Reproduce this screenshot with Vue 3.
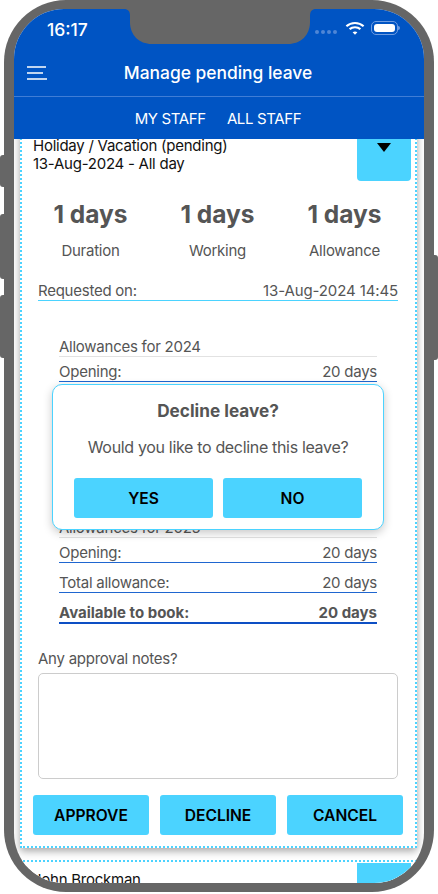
<script setup>
import { ref } from 'vue';

const notes = ref('');

const stats = [
    { value: '1 days', label: 'Duration' },
    { value: '1 days', label: 'Working' },
    { value: '1 days', label: 'Allowance' }
];

const allowances = [
    { year: 2024, opening: '20 days', total: '20 days', available: '20 days' },
    { year: 2025, opening: '20 days', total: '20 days', available: '20 days' }
];

const actions = ['APPROVE', 'DECLINE', 'CANCEL'];
</script>

<template>
    <div class="phone">
        <!-- side buttons -->
        <span class="side-btn mute"></span>
        <span class="side-btn vol-up"></span>
        <span class="side-btn vol-down"></span>
        <span class="side-btn power"></span>

        <div class="screen">
            <header class="app-header">
                <div class="status-bar">
                    <span class="clock">16:17</span>
                    <div class="status-icons">
                        <span class="signal"><i></i><i></i><i></i><i></i></span>
                        <svg class="wifi" viewBox="0 0 20 14" fill="none" stroke="#fff" stroke-width="2.2">
                            <path d="M1.4 5.2C6.2.9 13.8.9 18.6 5.2" />
                            <path d="M4.6 8.2c3-2.6 7.8-2.6 10.800 0" />
                            <path d="M10 13.800 7.600 11.200c1.400-1.100 3.400-1.100 4.800 0z" fill="#fff" stroke="none" />
                        </svg>
                        <span class="battery"><i></i></span>
                    </div>
                </div>
                <div class="title-row">
                    <svg class="menu-icon" viewBox="0 0 20 14" stroke="#fff" stroke-width="1.700" fill="none">
                        <path d="M0 1h19M0 7h16M0 13h20" />
                    </svg>
                    <h1>Manage pending leave</h1>
                </div>
                <nav class="tabs">
                    <span>MY STAFF</span>
                    <span>ALL STAFF</span>
                </nav>
            </header>

            <main class="content">
                <section class="card current">
                    <div class="card-head">
                        <div class="card-title">
                            <div>Holiday / Vacation (pending)</div>
                            <div>13-Aug-2024 - All day</div>
                        </div>
                        <button class="toggle">
                            <svg viewBox="0 0 14 9" width="14" height="9">
                                <path d="M0 0h14L7 9z" fill="#000" />
                            </svg>
                        </button>
                    </div>

                    <div class="stats">
                        <div v-for="s in stats" :key="s.label" class="stat">
                            <div class="stat-value">{{ s.value }}</div>
                            <div class="stat-label">{{ s.label }}</div>
                        </div>
                    </div>

                    <div class="requested">
                        <span>Requested on:</span>
                        <span>13-Aug-2024 14:45</span>
                    </div>

                    <div v-for="a in allowances" :key="a.year" class="allowance">
                        <div class="allowance-title">Allowances for {{ a.year }}</div>
                        <div class="row"><span>Opening:</span><span>{{ a.opening }}</span></div>
                        <div class="row"><span>Total allowance:</span><span>{{ a.total }}</span></div>
                        <div class="row strong"><span>Available to book:</span><span>{{ a.available }}</span></div>
                    </div>

                    <label class="notes-label">Any approval notes?</label>
                    <textarea v-model="notes" class="notes"></textarea>

                    <div class="actions">
                        <button v-for="a in actions" :key="a" class="btn">{{ a }}</button>
                    </div>
                </section>

                <section class="card next">
                    <div class="card-head">
                        <div class="card-title">
                            <div>John Brockman</div>
                        </div>
                        <button class="toggle"></button>
                    </div>
                </section>
            </main>

            <div class="dialog">
                <h2>Decline leave?</h2>
                <p>Would you like to decline this leave?</p>
                <div class="dialog-actions">
                    <button class="btn">YES</button>
                    <button class="btn">NO</button>
                </div>
            </div>

            <svg class="notch" viewBox="0 0 192 36" width="192" height="36">
                <path d="M0 0C4 0 6 2 6 7V13C6 26 15 35 28 35H164C177 35 186 26 186 13V7C186 2 188 0 192 0z" fill="#666" />
            </svg>
        </div>
    </div>
</template>

<style scoped>
.phone {
    position: relative;
    width: 430px;
    height: 892px;
    margin-left: 4px;
    padding: 9px 10px;
    box-sizing: border-box;
    background: #666;
    border-radius: 62px;
    font-family: Inter, "Liberation Sans", sans-serif;
}

.side-btn {
    position: absolute;
    width: 6px;
    background: #666;
}

.mute {
    left: -4px;
    top: 155px;
    height: 32px;
    border-radius: 3px 0 0 3px;
}

.vol-up {
    left: -4px;
    top: 214px;
    height: 65px;
    border-radius: 3px 0 0 3px;
}

.vol-down {
    left: -4px;
    top: 295px;
    height: 63px;
    border-radius: 3px 0 0 3px;
}

.power {
    right: -4px;
    top: 255px;
    height: 105px;
    border-radius: 0 3px 3px 0;
}

.screen {
    position: relative;
    width: 410px;
    height: 874px;
    display: flex;
    flex-direction: column;
    overflow: hidden;
    background: #fff;
    border-radius: 50px;
}

.notch {
    position: absolute;
    z-index: 4;
    left: 110px;
    top: 0;
}

.app-header {
    position: relative;
    z-index: 2;
    flex-shrink: 0;
    background: #0054c3;
    color: #fff;
}

.status-bar {
    display: flex;
    justify-content: space-between;
    align-items: center;
    height: 40px;
    padding: 0 26px 0 33px;
}

.clock {
    font-size: 17.500px;
    font-weight: 500;
}

.status-icons {
    display: flex;
    align-items: center;
    margin-top: -2px;
}

.signal {
    display: flex;
    gap: 2px;
    margin: 8px 8px 0 0;
}

.signal i {
    width: 4px;
    height: 4px;
    border-radius: 50%;
    background: #4f86d6;
}

.wifi {
    width: 20px;
    height: 14px;
}

.battery {
    position: relative;
    width: 27px;
    height: 14px;
    margin-left: 6px;
    padding: 2px;
    box-sizing: border-box;
    border: 1px solid #6f9ce0;
    border-radius: 5px;
}

.battery::after {
    content: "";
    position: absolute;
    right: -3px;
    top: 4px;
    width: 2px;
    height: 4px;
    border-radius: 0 2px 2px 0;
    background: #6f9ce0;
}

.battery i {
    display: block;
    height: 100%;
    border-radius: 3px;
    background: #fff;
}

.title-row {
    display: grid;
    grid-template-columns: 1fr auto 1fr;
    align-items: center;
    height: 47px;
    padding: 0 15px 0 13px;
}

.menu-icon {
    width: 20px;
    height: 14px;
}

.title-row h1 {
    margin: 0;
    font-size: 17.400px;
    font-weight: 500;
    white-space: nowrap;
}

.tabs {
    display: flex;
    justify-content: center;
    align-items: center;
    gap: 21px;
    height: 42px;
    padding-right: 2px;
    border-top: 1px solid #3f7dd6;
    font-size: 15px;
    letter-spacing: -0.35px;
}

.content {
    flex: 1;
    min-height: 0;
    overflow: hidden;
}

.card {
    margin: 0 7px 0 6px;
    background: #fff;
    border: 2px dotted #4bd3ff;
    box-shadow: 0 3px 8px rgba(0, 0, 0, 0.36);
    color: #555;
    font-size: 15px;
    line-height: 18px;
    letter-spacing: -0.25px;
}

.current {
    margin-top: -10px;
    padding-bottom: 11px;
}

.next {
    margin-top: 12px;
    box-shadow: none;
}

.card-head {
    display: flex;
    justify-content: space-between;
    padding: 0 4px 0 11px;
}

.card-title {
    padding-top: 6px;
    color: #111;
}

.next .card-head {
    padding-top: 1px;
}

.next .card-title {
    padding-top: 8px;
}

.toggle {
    display: flex;
    justify-content: center;
    width: 54px;
    height: 50px;
    padding: 12px 0 0;
    border: 0;
    border-radius: 0 0 4px 4px;
    background: #4bd3ff;
}

.stats {
    display: grid;
    grid-template-columns: repeat(3, 127px);
    margin: 18px 0 0 5px;
    text-align: center;
}

.stat-value {
    font-size: 24.500px;
    font-weight: 700;
    line-height: 30px;
    letter-spacing: 0;
}

.stat-label {
    margin-top: 12px;
    line-height: 20px;
}

.requested {
    display: flex;
    justify-content: space-between;
    margin: 20px 17px 0 16px;
    padding-top: 1px;
    border-bottom: 1px solid #4bd3ff;
}

.requested span:last-child {
    letter-spacing: -0.12px;
}

.allowance {
    margin: 75px 38px 0 37px;
}

.requested + .allowance {
    margin-top: 36px;
}

.allowance-title {
    margin-bottom: 5px;
    padding-top: 1px;
    border-bottom: 1px solid #e2e2e2;
}

.row {
    display: flex;
    justify-content: space-between;
    margin-bottom: 10px;
    padding-top: 1px;
    border-bottom: 1px solid #1f66d0;
}

.row.strong {
    margin-bottom: 0;
    border-bottom: 2px solid #0d4fc4;
    font-weight: 700;
    letter-spacing: 0;
}

.notes-label {
    display: block;
    margin: 26px 0 0 16px;
}

.notes {
    display: block;
    width: 360px;
    height: 106px;
    margin: 5px 0 0 16px;
    box-sizing: border-box;
    border: 1px solid #ccc;
    border-radius: 5px;
    resize: none;
    outline: none;
}

.actions {
    display: grid;
    grid-template-columns: repeat(3, 116px);
    gap: 11px;
    margin: 16px 0 0 11px;
}

.btn {
    height: 40px;
    padding: 0;
    border: 0;
    border-radius: 3px;
    background: #4bd3ff;
    color: #000;
    font-family: inherit;
    font-size: 15.600px;
    font-weight: 600;
    letter-spacing: 0;
}

.dialog {
    position: absolute;
    z-index: 3;
    left: 38px;
    top: 375px;
    width: 332px;
    height: 146px;
    box-sizing: border-box;
    padding: 0 21px;
    background: #fff;
    border: 1px solid #4bd3ff;
    border-radius: 10px;
    box-shadow: 0 3px 10px rgba(0, 0, 0, 0.22);
    color: #555;
    text-align: center;
}

.dialog h2 {
    margin: 16px 0 0;
    font-size: 17.200px;
    font-weight: 700;
    line-height: 20px;
}

.dialog p {
    margin: 16px 0 0;
    font-size: 16px;
    line-height: 20px;
    letter-spacing: -0.33px;
}

.dialog-actions {
    display: grid;
    grid-template-columns: repeat(2, 139px);
    gap: 10px;
    margin-top: 21px;
}
</style>

<style>
html,
body {
    background: #fff;
}
</style>
